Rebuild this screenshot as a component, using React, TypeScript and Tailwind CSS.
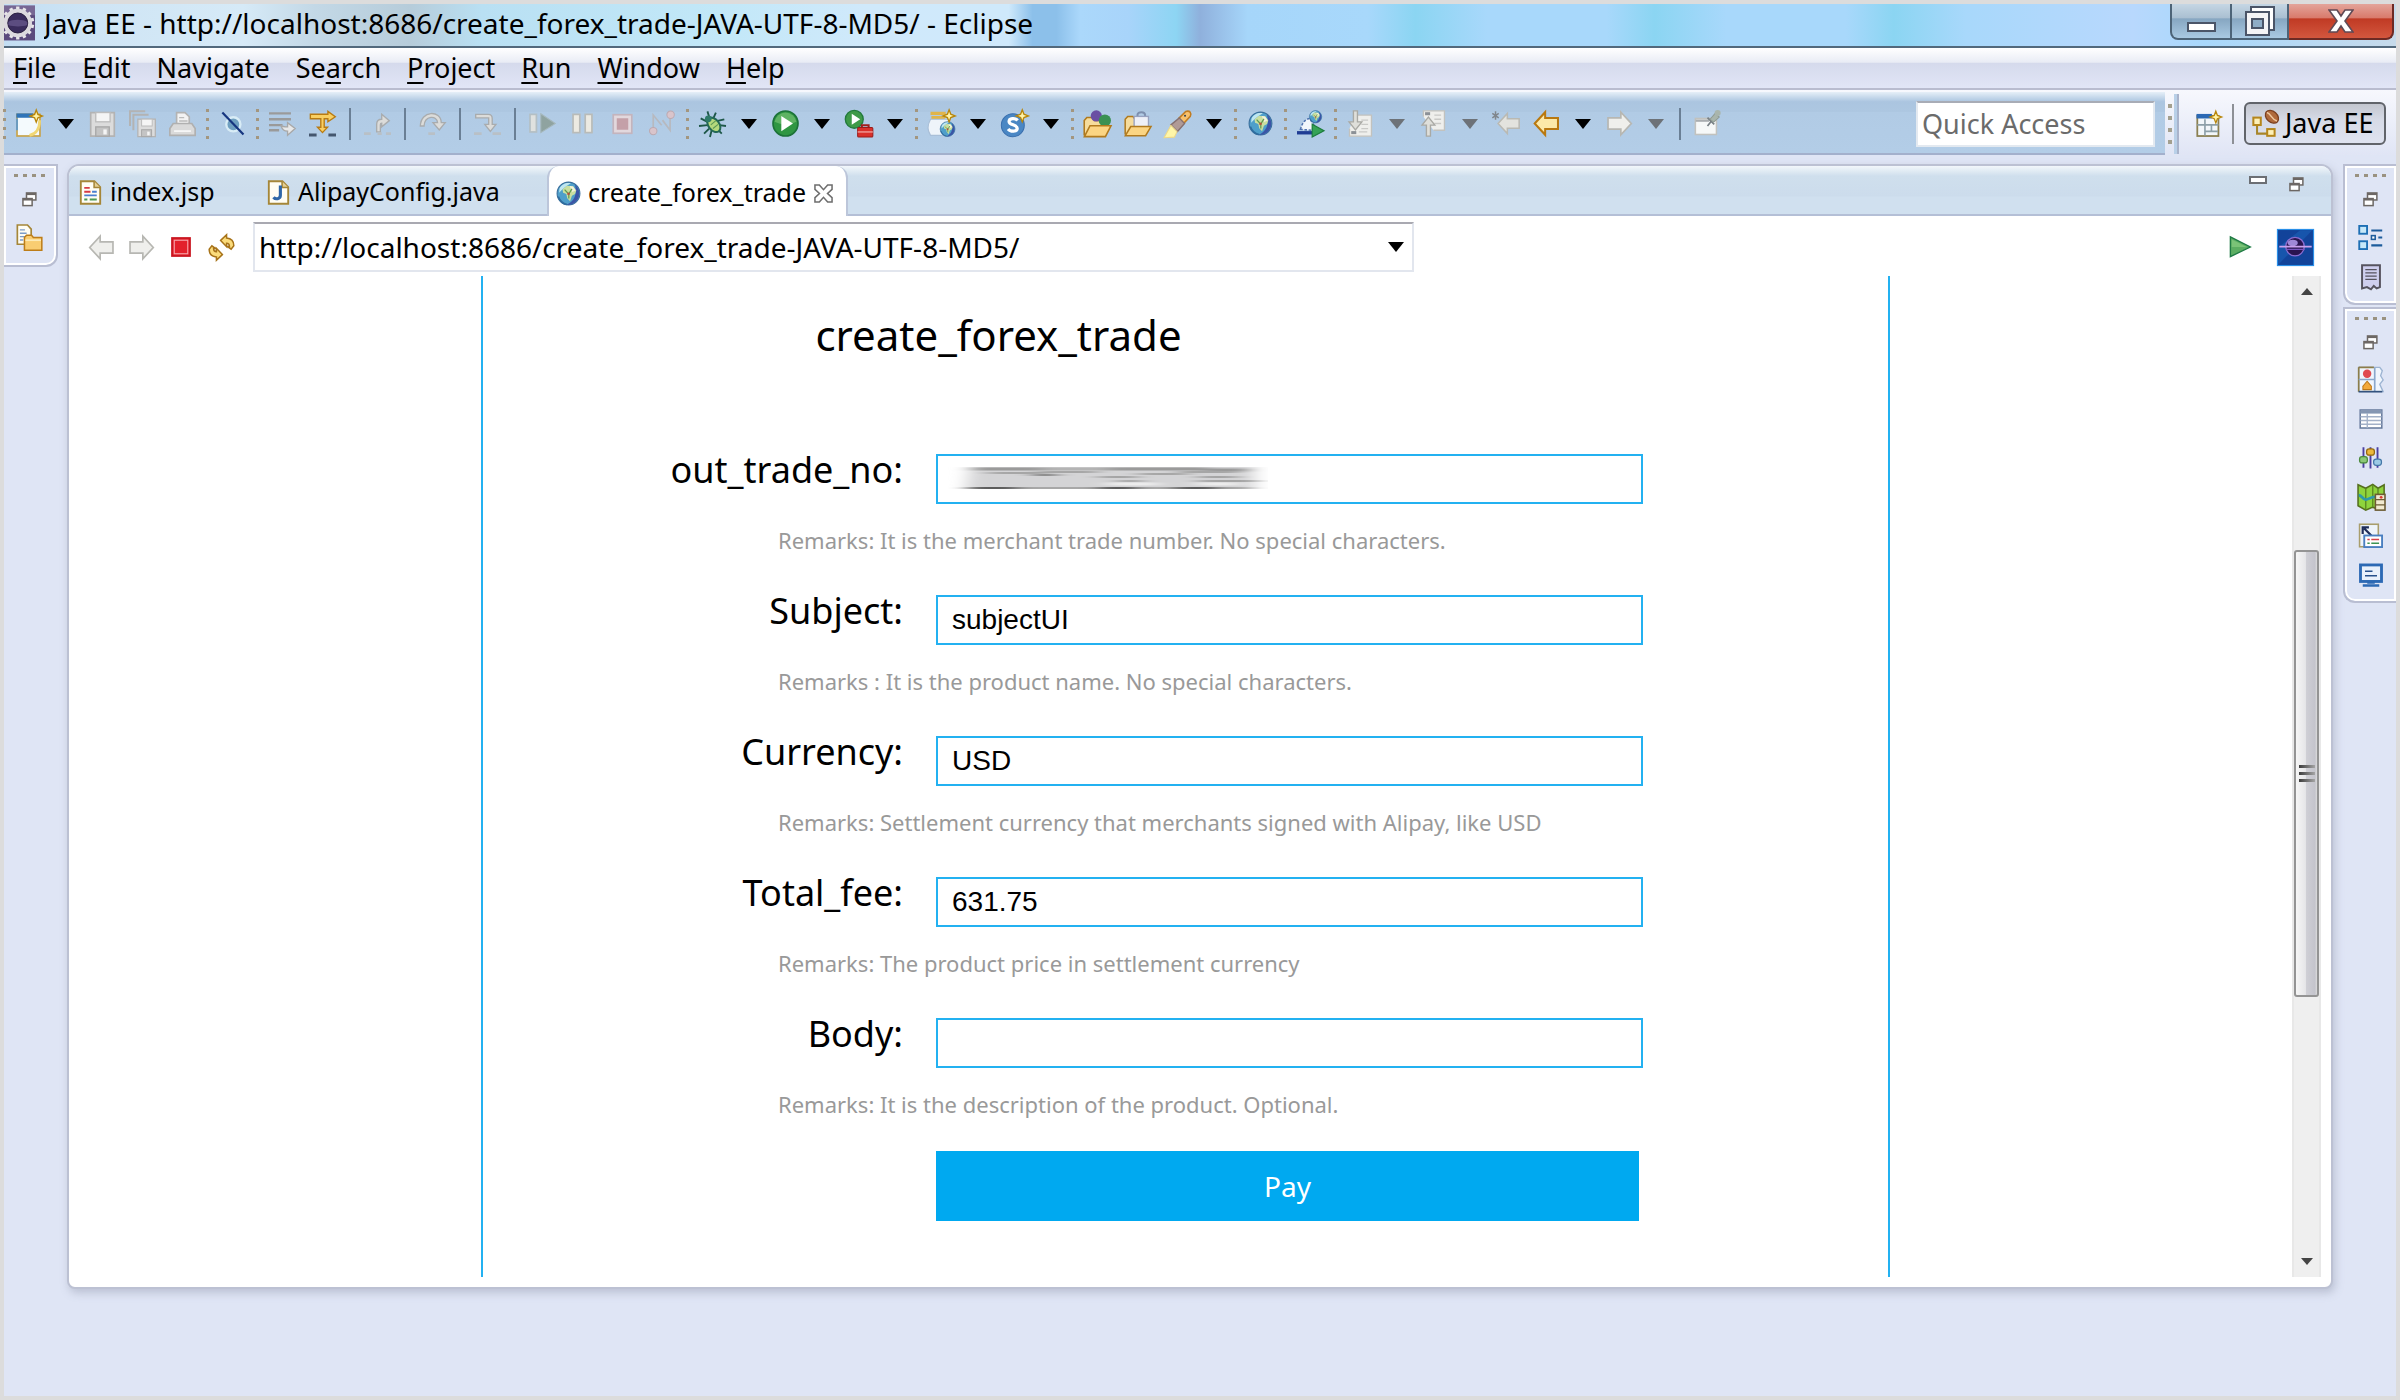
import React, { useId } from "react";

type Kids = { children?: React.ReactNode };

function Ic({ children, size = "size-[27px]" }: Kids & { size?: string }) {
  return (
    <svg viewBox="0 0 16 16" className={"shrink-0 overflow-visible " + size} fill="none" aria-hidden="true">
      {children}
    </svg>
  );
}

/* ---------- toolbar icons ---------- */

const spark = (x: number, y: number) => (
  <path
    transform={`translate(${x} ${y})`}
    d="M0-3.6 1-1 3.6 0 1 1 0 3.6-1 1-3.6 0-1-1Z"
    fill="#fff3a8"
    stroke="#b8860b"
    strokeWidth=".8"
  />
);

const NewIcon = () => (
  <Ic>
    <rect x=".6" y="2.6" width="13.6" height="12.8" fill="#f4fafd" stroke="#c8a34a" strokeWidth="1" />
    <rect x=".2" y="2" width="10" height="2.6" fill="#2f74b8" />
    <path d="M.6 5v7" stroke="#5c98d0" />
    <path d="M14 6c0 5-1.500 8-6 9" stroke="#f0d774" strokeWidth="1.6" />
    {spark(12, 3.6)}
  </Ic>
);
const floppy = (
  <>
    <path d="M1 1.500h14v14H1z" fill="#dcdcdc" stroke="#b3b3b3" />
    <rect x="4" y="1.500" width="8.500" height="5.500" fill="#f5f5f5" stroke="#bdbdbd" strokeWidth=".8" />
    <rect x="4" y="10" width="8" height="5.500" fill="#c4c4c4" stroke="#a8a8a8" strokeWidth=".8" />
    <rect x="8.500" y="11.500" width="2" height="3" fill="#f5f5f5" />
  </>
);
const SaveIcon = () => <Ic>{floppy}</Ic>;
const SaveAllIcon = () => (
  <Ic>
    <path d="M.6 9.500V.8h9" stroke="#b3b3b3" strokeWidth="1.200" />
    <path d="M2.600 12V2.800h9" stroke="#b3b3b3" strokeWidth="1.200" />
    <g transform="translate(4.500 4.300) scale(.74)">{floppy}</g>
  </Ic>
);
const PrintIcon = () => (
  <Ic>
    <path d="M4.500 8V1.500h5l2.500 2.500v4" fill="#f3f3f3" stroke="#b3b3b3" />
    <path d="M6 4.500h3M6 6.500h5" stroke="#bbb" strokeWidth=".8" />
    <path d="M2.500 8h11l2 3v4h-15v-4z" fill="#dadada" stroke="#b0b0b0" />
    <path d="M3 12.500h10" stroke="#f8f8f8" />
  </Ic>
);
const SkipBreakIcon = () => (
  <Ic>
    <circle cx="8.500" cy="8.500" r="4.200" fill="#6f9fc0" stroke="#d8ecf6" strokeWidth="1.400" />
    <path d="M2 1.500 14.500 14.500" stroke="#16357f" strokeWidth="1.300" />
  </Ic>
);
const LinesIcon = () => (
  <Ic>
    <path d="M0 2h13M0 5.500h13M0 9h8M0 12h6" stroke="#9a9a9a" strokeWidth="1.400" />
    <path d="M7 9c1 3 2 3.500 4 3.500V15l4.500-4-4.500-3.500V10c-1.500 0-3 0-4-1Z" fill="#e8e8e8" stroke="#a8a8a8" strokeWidth=".8" />
  </Ic>
);
const StepFilterIcon = () => (
  <Ic>
    <path d="M.8 2.500h10.400V.8L15.600 4l-4.400 3V5.200H9v5h2L8 13.400 5 10.200h2v-5H.8z" fill="#f9cf62" stroke="#b97b12" strokeWidth=".8" />
    <path d="M0 14.800h4.500M11.500 14.800H16" stroke="#44566e" strokeWidth="1.800" />
  </Ic>
);
const faded = "#a9acae";
const StepRetIcon = () => (
  <Ic>
    <path d="M7.500 13V8.500c0-2 1-3 3-3V2.500L15 6.300 10.500 10V7.800c-.6 0-.8.4-.8 1V13z" fill="#dcdcda" stroke={faded} strokeWidth=".8" />
    <path d="M0 14h4M8 14h2.500M13 14h3" stroke="#b9c0c6" strokeWidth="1.600" />
  </Ic>
);
const StepOverIcon = () => (
  <Ic>
    <path d="M.8 9.500C1 0 13 0 13.200 7.500h2.300l-3.500 4.300-3.700-4.300H11C10.800 3 3.300 3 3 9.500z" fill="#dcdcda" stroke={faded} strokeWidth=".8" />
    <path d="M5.500 14h4" stroke="#b9c0c6" strokeWidth="1.600" />
  </Ic>
);
const StepIntoIcon = () => (
  <Ic>
    <path d="M1 2.600h7.500c1.600 0 2.300.8 2.300 2.400v3.500H13l-3.300 4.200L6.400 8.500h2.300V4.700H1z" fill="#dcdcda" stroke={faded} strokeWidth=".8" />
    <path d="M0 14h4.500M11 14h5" stroke="#b9c0c6" strokeWidth="1.600" />
  </Ic>
);
const ResumeIcon = () => (
  <Ic>
    <rect x=".6" y="2.600" width="3.800" height="10.400" fill="#dfe1df" stroke="#b4bfc4" />
    <path d="M7 2.200v11.200L15.600 8z" fill="#8fa3a0" stroke="#a5b7bb" strokeWidth=".6" />
  </Ic>
);
const PauseIcon = () => (
  <Ic>
    <rect x="2.400" y="2.600" width="4" height="10.800" fill="#eceae2" stroke="#b9bbb8" />
    <rect x="9.600" y="2.600" width="4" height="10.800" fill="#eceae2" stroke="#b9bbb8" />
  </Ic>
);
const StopIcon = () => (
  <Ic>
    <rect x="2.500" y="2.800" width="11" height="11" fill="#e2d8dd" stroke="#c4b4bd" />
    <rect x="4.600" y="4.900" width="6.800" height="6.800" fill="#c4a0a8" />
  </Ic>
);
const DisconnectIcon = () => (
  <Ic>
    <path d="M2.500 11V3l5 6M8 6l4.500 6V4" stroke="#b7b9bf" />
    <circle cx="2.500" cy="12.500" r="2.200" fill="#d9c4cb" stroke="#bca9b1" strokeWidth=".6" />
    <circle cx="12.800" cy="2.800" r="2.200" fill="#d9c4cb" stroke="#bca9b1" strokeWidth=".6" />
  </Ic>
);
const BugIcon = () => (
  <Ic>
    <path d="M5 .8 6 4M10 1.500 8.500 5M1 5l4 2M0 9.500l5-.5M3 14l3-3M6.500 16l1-4M15 5.500l-4 1M16 9.500l-4-.5M13.500 14l-2.500-2.500" stroke="#1e5748" strokeWidth="1.100" />
    <ellipse cx="8.800" cy="8.800" rx="3.200" ry="4.800" transform="rotate(-38 8.800 8.800)" fill="#b4d87c" stroke="#246855" strokeWidth="1.200" />
    <circle cx="5.500" cy="5.200" r="2" fill="#2e7a68" />
    <path d="m7 8.800 3-2.500M8.300 11l3-2.500" stroke="#5e9a56" strokeWidth=".7" />
  </Ic>
);
const RunIcon = () => (
  <Ic>
    <circle cx="8" cy="8" r="7.400" fill="#2f9642" stroke="#1c7238" strokeWidth="1" />
    <path d="M1.500 7a6.600 6.600 0 0 1 13 0c-4 2-9 2-13 0z" fill="#74bf72" opacity=".7" />
    <path d="M5.500 3.600v9L12.400 8z" fill="#fff" />
  </Ic>
);
const ExtToolsIcon = () => (
  <Ic>
    <circle cx="5.500" cy="5.500" r="5.300" fill="#3f9a48" stroke="#237a3c" strokeWidth=".8" />
    <path d="M4 2.200v6.600L9 5.500z" fill="#fff" />
    <path d="M10 10.500V9h4v1.500" stroke="#a01f1c" strokeWidth="1.200" />
    <rect x="7.500" y="10.300" width="9" height="5.700" rx=".6" fill="#d9302b" stroke="#981c1a" strokeWidth=".6" />
    <path d="M7.500 13h9" stroke="#f0a09c" strokeWidth=".8" />
  </Ic>
);
function Globe() {
  return (
    <>
      <circle cx="8" cy="8" r="7.300" fill="#4f9fca" stroke="#3a6f9c" strokeWidth=".7" />
      <path d="M12 2.300c3.600 2.700 4.200 8.300 0 11.600-1.400 1-3.600 1.600-5 1.200C11.500 13.500 14 8 12 2.300z" fill="#3b55a6" />
      <path d="M2.200 5C3.500 2 6.500.9 9.500 1.500L7 3 4 5.500 2 7.500z" fill="#bfe6f0" />
      <path d="M4.200 5.200 7 3l4 .3 2 2.700-.8 2.300-2 1.200L9 13 7.200 11 6.600 8.300 4.500 7.500z" fill="#c9dfa0" />
      <path d="M8.800 3.200 11 3.500 12.600 6l-2.200 1z" fill="#f3f2da" />
      <path d="m5.500 5.500 2 2.200M10.200 5l-2 3.200v3" stroke="#5f9a52" strokeWidth=".8" />
      <circle cx="8" cy="8.200" r=".9" fill="#b4553f" />
      <path d="M1.500 10c1 2.800 3 4.500 5.500 5" stroke="#2f6c9e" strokeWidth="1" />
    </>
  );
}
const GlobeIcon = () => (
  <Ic size="size-[25px]">
    <Globe />
  </Ic>
);
const ServletIcon = () => (
  <Ic>
    <path d="M1.500 2h9M2 4.500h8" stroke="#e0b54c" strokeWidth="1.800" />
    <path d="M1.500 5.500h11v9.500h-11c-2-3-2-6 0-9.500z" fill="#eef4fa" stroke="#a9bfd8" strokeWidth=".7" />
    <g transform="translate(6.800 6.500) scale(.6)">
      <Globe />
    </g>
    {spark(12.500, 3.500)}
  </Ic>
);
const SIcon = () => (
  <Ic>
    <circle cx="7" cy="9" r="6.800" fill="#4a87c4" stroke="#3a6fae" strokeWidth=".6" />
    <path d="M9.800 6.200C8.500 4.500 4.600 4.800 4.800 7c.2 2 4.800 1.600 4.800 3.800 0 2.200-4 2.200-5.400.4" stroke="#fff" strokeWidth="1.900" />
    {spark(12.600, 3.500)}
  </Ic>
);
const OpenTypeIcon = () => (
  <Ic size="size-[28px]">
    <path d="M.7 14.500V6l1.500-1.700h3L6.500 6H13v3" fill="#f6dc9c" stroke="#b17a1d" strokeWidth=".9" />
    <circle cx="7.600" cy="3.400" r="3.200" fill="#6a4fa3" />
    <circle cx="12.500" cy="6" r="3.500" fill="#3a9152" />
    <path d="M.8 15.200 4 9h12l-3.200 6.200z" fill="#fbd583" stroke="#b17a1d" strokeWidth=".9" />
  </Ic>
);
const OpenTaskIcon = () => (
  <Ic>
    <path d="M.7 14.500V5.500l1.500-1.700h3L6.500 5.500H13v3" fill="#f6dc9c" stroke="#b17a1d" strokeWidth=".9" />
    <path d="M8 4.500V3c0-2.300 4.500-2.300 4.500 0v1.500" stroke="#7d8fae" strokeWidth="1.200" />
    <rect x="6" y="3.800" width="8.500" height="6.500" fill="#eef0f8" stroke="#98a2c0" strokeWidth=".8" />
    <path d="M.8 15.200 4 9.800h12l-3.200 5.400z" fill="#fbd583" stroke="#b17a1d" strokeWidth=".9" />
  </Ic>
);
const TorchIcon = () => (
  <Ic size="size-[28px]">
    <path d="M9 4.800 13 .8c2.500-.6 3.400.8 2.600 2.800L11.500 8z" fill="#f7c06c" stroke="#c17c22" strokeWidth=".9" />
    <path d="m4.500 8.500 4.800-4 3 3.200-4 4.600z" fill="#b09a96" stroke="#857070" strokeWidth=".8" />
    <path d="M4.500 8.800 8 12.400 6.500 15.500.6 15.800z" fill="#fff6a8" stroke="#ecd88a" strokeWidth=".6" />
    <circle cx="12.600" cy="3.300" r=".6" fill="#345" />
  </Ic>
);
const LaunchWebIcon = () => (
  <Ic>
    <path d="M2 11.500C3 8 4.500 5.500 7.500 5L10 9l-1 3z" fill="#f2f7fc" stroke="#5173b0" strokeWidth=".9" strokeDasharray="1.500 1" />
    <g transform="translate(7 0) scale(.5)">
      <Globe />
    </g>
    <path d="M0 13.500h9" stroke="#1f3c94" strokeWidth="2" />
    <path d="M9 8.500v7.500l7-3.700z" fill="#35a356" stroke="#1c7c3c" strokeWidth=".7" />
  </Ic>
);
const NextAnnIcon = () => (
  <Ic>
    <path d="M5 3h9.500v12.500H1.500V11" fill="#efefec" stroke="#c2c2be" strokeWidth=".8" />
    <path d="M8.500 6h4M8.500 8.500h4M8.500 11h4M7 13h5" stroke="#c9c9c6" strokeWidth=".8" />
    <path d="M3.800.5h2.400V7h2.600L5 11.800 1.200 7h2.600z" fill="#dfdfda" stroke="#a9a9a4" strokeWidth=".8" />
    <rect x="2.500" y="12.500" width="3" height="1.800" fill="#8b9096" />
  </Ic>
);
const PrevAnnIcon = () => (
  <Ic>
    <path d="M2 4V.5h12.500V12H8" fill="#efefec" stroke="#c2c2be" strokeWidth=".8" />
    <path d="M8.500 3h4M8.500 5.500h4M8.500 8h4" stroke="#c9c9c6" strokeWidth=".8" />
    <path d="M3.800 15.500h2.400V9h2.600L5 4.200 1.200 9h2.600z" fill="#dfdfda" stroke="#a9a9a4" strokeWidth=".8" />
    <rect x="3" y="1.300" width="3" height="1.800" fill="#8b9096" />
  </Ic>
);
const arrowLeft = "M1 8 7.200 1.300v3.400h7.600v6.600H7.200v3.400z";
const arrowRight = "M15 8 8.800 1.300v3.400H1.200v6.600h7.600v3.400z";
const LastEditIcon = () => (
  <Ic>
    <path d="M3 8 8.500 2v3.200H15.500v5.600H8.500V14z" fill="#e3e3de" stroke="#b9b9b3" strokeWidth=".9" />
    <path d="M1.500.8v5M-.4 2l3.800 2.600M3.400 2-.4 4.600" stroke="#80868c" strokeWidth=".9" />
  </Ic>
);
const BackGoldIcon = () => (
  <Ic>
    <path d={arrowLeft} fill="#fce9a8" stroke="#b9780f" strokeWidth="1.200" />
  </Ic>
);
const ArrowGray = ({ right }: { right?: boolean }) => (
  <Ic>
    <path d={right ? arrowRight : arrowLeft} fill="#efefec" stroke="#b7b7b2" strokeWidth="1" />
  </Ic>
);
const PinIcon = () => (
  <Ic>
    <rect x=".8" y="5" width="12.500" height="9.500" fill="#f6f8f8" stroke="#c2c2be" strokeWidth=".9" />
    <path d="M1 6.300h8" stroke="#a9adb0" strokeWidth="1.400" />
    <path d="m8 9.500 2-2.500M8 4.500l4 4" stroke="#777f84" />
    <path d="m9.500 5.500 3-3.500 2.500 2.200-3.300 3z" fill="#a9b5ac" stroke="#8d9a92" strokeWidth=".6" />
    <circle cx="14" cy="1.800" r="1.800" fill="#a9b5ac" />
  </Ic>
);
const PerspectiveIcon = () => (
  <Ic size="size-[26px]">
    <rect x=".8" y="3" width="13" height="12.400" fill="#f2f7fa" stroke="#8b8052" strokeWidth="1.100" />
    <rect x=".3" y="1.800" width="9.500" height="2.800" fill="#2a68b4" />
    <path d="M5.500 5v10M.8 8.500h13M9.500 8.500v4M5.500 12.500h8" stroke="#8da0a8" strokeWidth="1" />
    {spark(12.200, 3.700)}
  </Ic>
);
const JavaEEIcon = () => (
  <Ic size="size-[27px]">
    <path d="M3 7v7h7" stroke="#a78528" strokeWidth="1.200" />
    <rect x=".8" y="4.500" width="4.400" height="4.400" fill="#fdf0b8" stroke="#b5861c" strokeWidth="1.200" />
    <rect x="9" y="11.300" width="4.400" height="4" fill="#fdf0b8" stroke="#b5861c" strokeWidth="1.200" />
    <ellipse cx="11.800" cy="4" rx="3.200" ry="4.400" transform="rotate(-48 11.800 4)" fill="#b06a3c" stroke="#7c4020" strokeWidth=".8" />
    <path d="M8.800 1.500c2.500.5 2.500 4 6 5" stroke="#f0c9a0" strokeWidth=".9" />
  </Ic>
);

/* ---------- file, browser and side icons ---------- */

const page = <path d="M1.800.8h8.700L14.200 4.500v10.700H1.800z" fill="#fffdf4" stroke="#a58638" strokeWidth="1.200" />;
const JspIcon = () => (
  <Ic size="size-[25px]">
    {page}
    <path d="M10.300.8v4h4" fill="#e5cf93" stroke="#a58638" />
    <path d="M4 5h3.500M4 7.500h4" stroke="#d63a44" strokeWidth="1.200" />
    <path d="M9 7.500h3M4 9.800h8" stroke="#4a7fd0" strokeWidth="1.200" />
    <path d="M4 12.500h2M7.500 12.500h4.500" stroke="#4b9a55" strokeWidth="1.200" />
  </Ic>
);
const JavaIcon = () => (
  <Ic size="size-[25px]">
    {page}
    <path d="M10.300.8v4h4" fill="#e5cf93" stroke="#a58638" />
    <path d="M9.200 3.500v6.300c0 2.600-3.200 2.800-4.400 1.200" stroke="#2e66a8" strokeWidth="2" />
  </Ic>
);
const CloseX = () => (
  <Ic size="size-[19px]">
    <path
      d="M.8.800h3.700L8 4.800 11.500.8h3.700v3.700L11.400 8l3.800 3.500v3.700h-3.700L8 11.200l-3.500 4H.8v-3.700L4.600 8 .8 4.500z"
      stroke="#6e6e6e"
      strokeWidth="1.300"
    />
  </Ic>
);
const RedStop = () => (
  <Ic size="size-[20px]">
    <rect x=".8" y=".8" width="14.400" height="14.400" fill="#e3212b" stroke="#c9151f" strokeWidth="1.400" />
    <rect x="2.600" y="2.600" width="10.800" height="10.800" stroke="#f6a4a8" strokeWidth=".9" />
  </Ic>
);
const RefreshIcon = () => (
  <Ic>
    <path d="M7.500 3.800 11 .4v2c2.600.2 4.300 1.800 4.300 4.600L13.700 9l-2.200-1.600h1.200c0-1.300-.6-1.900-1.700-1.900v2z" fill="#fbdc7c" stroke="#a8741a" strokeWidth=".9" />
    <path d="M8.500 12.200 5 15.600v-2C2.400 13.400.7 11.800.7 9L2.300 7l2.200 1.600H3.300c0 1.300.6 1.900 1.700 1.900v-2z" fill="#fbdc7c" stroke="#a8741a" strokeWidth=".9" />
  </Ic>
);
const PlayIcon = () => (
  <Ic size="size-[22px]">
    <path d="M1 .6v14.400L15.500 8z" fill="#5cae62" stroke="#1f7a45" strokeWidth="1" />
    <path d="M2 2.500v5.500h11z" fill="#8ed086" opacity=".6" />
  </Ic>
);
const EclipseBadge = () => (
  <Ic size="size-[37px]">
    <rect x=".2" y=".2" width="15.600" height="15.600" fill="#12439a" stroke="#2a8fe8" strokeWidth=".5" />
    <path d="M.5 15.500V8L10 .5h5.300z" fill="#1a5cb4" opacity=".7" />
    <circle cx="7.800" cy="7.600" r="4" fill="#2a1450" stroke="#8a6cd0" strokeWidth=".6" />
    <ellipse cx="6.800" cy="6" rx="2.200" ry="1.400" fill="#9f88d8" />
    <path d="M1 7.600h14" stroke="#c9a0ee" strokeWidth=".7" />
    <path d="M4 8.800h8" stroke="#7a54c0" strokeWidth=".6" />
  </Ic>
);
const RestoreIcon = () => (
  <Ic size="size-[15px]">
    <rect x="4.800" y="1" width="10" height="7.500" fill="#fff" stroke="#6c6764" strokeWidth="1.600" />
    <path d="M4.800 2.200h10" stroke="#6c6764" strokeWidth="2.200" />
    <rect x="1" y="7" width="9.800" height="7.500" fill="#fff" stroke="#6c6764" strokeWidth="1.600" />
    <path d="M1 8h9.800" stroke="#6c6764" strokeWidth="2.200" />
  </Ic>
);
const ExplorerIcon = () => (
  <Ic>
    <path d="M.8.600h6L9 3v9H.8z" fill="#fffdf4" stroke="#a58638" />
    <path d="M2.300 3.500h3M2.300 5.500h4M2.300 7.500h3M2.300 9.500h2" stroke="#7d9cc8" strokeWidth=".8" />
    <path d="M5 15.500V8l1.200-1.300h3L10.300 8h5v7.500z" fill="#f9cd72" stroke="#bd7d18" strokeWidth=".9" />
    <path d="M5.600 9.600h9.200" stroke="#fdebb8" />
  </Ic>
);
const OutlineIcon = () => (
  <Ic size="size-[25px]">
    <rect x=".8" y=".6" width="5" height="5" fill="#c6e8f8" stroke="#1d6fb4" strokeWidth="1.200" />
    <rect x=".8" y="10.400" width="5" height="5" fill="#c6e8f8" stroke="#1d6fb4" strokeWidth="1.200" />
    <path d="M8.500 3.500h7M13 8h2.500M8.500 13h7" stroke="#1d5c9c" strokeWidth="1.400" />
    <rect x="8.600" y="6.800" width="2.400" height="2.400" fill="#fff" stroke="#1d5c9c" strokeWidth="1" />
  </Ic>
);
const TasksIcon = () => (
  <Ic size="size-[26px]">
    <path d="M2.500.8h11v13.400l-2 .8-1.800-1.500L8 15.600l-2.500-1.400-3 .8z" fill="#cfcfee" stroke="#56535e" strokeWidth="1.200" />
    <path d="M4.500 3.500h7M4.500 5.500h7M4.500 7.500h7M4.500 9.500h7" stroke="#56535e" strokeWidth=".8" />
  </Ic>
);
const MarkersIcon = () => (
  <Ic>
    <path d="M1 .8h12.500l1.500 2-1 3 1.500 2.500-2 2.500 2 4.400H1z" fill="#f0f6fd" stroke="#9db4d2" strokeWidth=".8" />
    <path d="M1 .8v14.400M1 .8h9" stroke="#8c7d4a" strokeWidth="1" />
    <path d="M1 8h9.500M10.500 1v14" stroke="#8ba8cc" />
    <circle cx="6" cy="4.600" r="2.500" fill="#e04a50" />
    <path d="M3.500 14v-2l2.500-3 2.500 3v2z" fill="#f3a93a" stroke="#bd7818" strokeWidth=".6" />
    <path d="M1 15.200h14" stroke="#33527e" strokeWidth="1" />
  </Ic>
);
const TableIcon = () => (
  <Ic size="size-[24px]">
    <rect x=".8" y="2" width="14.400" height="12" fill="#fff" stroke="#64789a" strokeWidth="1" />
    <path d="M.8 3.300h14.400" stroke="#8496b2" strokeWidth="2.200" />
    <path d="M1 6.500h14M1 9h14M1 11.500h14M5.500 4v10" stroke="#a3b1c8" strokeWidth=".9" />
  </Ic>
);
const ServersIcon = () => (
  <Ic size="size-[25px]">
    <path d="M3.500 1.500v13M8 1.500v13.500M12.500 1.500v13" stroke="#4a3fa0" strokeWidth="1.200" />
    <rect x="1" y="7.500" width="5" height="4" rx="1.600" fill="#8cc878" stroke="#4a8a3c" strokeWidth=".8" />
    <rect x="5.500" y="2.500" width="5" height="4" rx="1.600" fill="#ecb83c" stroke="#96690e" strokeWidth=".8" />
    <rect x="10" y="9" width="5" height="4" rx="1.600" fill="#9ccbe6" stroke="#4478a8" strokeWidth=".8" />
  </Ic>
);
const DataSourceIcon = () => (
  <Ic size="size-[28px]">
    <path d="M.6 1 5 3l4-2.200L12 3l3.500-2v12.500L12 15l-3-1.200L5 15.500.6 13z" fill="#8ed43c" stroke="#56701e" strokeWidth=".9" />
    <path d="M5 3v12M9 1v12.500M12 3v5" stroke="#5d8a22" strokeWidth=".8" />
    <path d="M1 7c2 0 2 2.500 4 2.500S8 7.500 11 8" stroke="#2e9aa8" strokeWidth="1.600" />
    <rect x="10.500" y="6.500" width="5.500" height="9" fill="#f1ead0" stroke="#6c5c34" strokeWidth=".9" />
    <path d="M10.500 9.500H16M10.500 12.500H16" stroke="#6c5c34" strokeWidth=".8" />
    <circle cx="13.800" cy="8.200" r=".8" fill="#dc3a30" />
  </Ic>
);
const SnippetsIcon = () => (
  <Ic size="size-[25px]">
    <rect x="1" y=".8" width="12" height="14.400" fill="#eef4fa" stroke="#a99e6c" strokeWidth="1" />
    <path d="M8.500 8 4 3.500M3 7V2.800h4" stroke="#1e2c58" strokeWidth="1.400" />
    <rect x="4" y="8" width="11.400" height="7.400" fill="#fff" stroke="#4a7fc0" strokeWidth="1.200" />
    <path d="M6 10.500h1.500M8.500 10.500h5" stroke="#d8404a" strokeWidth="1" />
    <path d="M6 13h1.500M8.500 13h5" stroke="#3d9454" strokeWidth="1" />
  </Ic>
);
const ConsoleIcon = () => (
  <Ic size="size-[24px]">
    <rect x="1" y="1.300" width="14" height="11" fill="#e8f0fb" stroke="#2c69b4" strokeWidth="1.900" />
    <path d="M4 5.500h5M4 8.500h8" stroke="#27508c" strokeWidth="1" />
    <path d="M5.500 13h5M2.500 15h11" stroke="#2c69b4" strokeWidth="1.600" />
  </Ic>
);
const EclipseLogo = () => {
  const teeth = Array.from({ length: 14 }, (_, i) => i * (360 / 14));
  return (
    <svg viewBox="0 0 32 36" className="h-[36px] w-[31px] shrink-0" aria-hidden="true">
      <rect width="32" height="36" fill="#5b4a7d" />
      <rect width="32" height="10" fill="#8a7ba4" opacity=".6" />
      {teeth.map((a) => (
        <rect key={a} x="12.500" y="1" width="3.400" height="6" fill="#e8e6ea" transform={`rotate(${a} 14.200 18)`} />
      ))}
      <circle cx="14.200" cy="18" r="12.500" fill="none" stroke="#dcd9de" strokeWidth="4.500" />
      <circle cx="14.200" cy="18" r="10.300" fill="#3a2c5c" stroke="#2a2040" strokeWidth="1" />
      <path d="M4.500 17c3-3 16-3 19.500 0v3c-5 2-14 2-19.500 0z" fill="#5c4d80" />
    </svg>
  );
};

/* ---------- small building blocks ---------- */

function Tool({ label, children }: Kids & { label: string }) {
  return (
    <button type="button" aria-label={label} className="flex w-10 shrink-0 items-center justify-center">
      {children}
    </button>
  );
}
function Drop({ dim }: { dim?: boolean }) {
  return (
    <button type="button" aria-label="More" className="flex w-[33px] shrink-0 justify-center">
      <svg viewBox="0 0 16 10" className="h-[10px] w-4" aria-hidden="true">
        <path d="M0 0h16L8 10z" fill={dim ? "#6d7278" : "#000"} />
      </svg>
    </button>
  );
}
function Grip() {
  return (
    <span className="flex w-[10px] shrink-0 flex-col items-center gap-[6px]">
      {[0, 1, 2, 3].map((i) => (
        <i key={i} className="size-[3px] bg-[#a3967f]" />
      ))}
    </span>
  );
}
function Bar() {
  return (
    <span className="flex w-[15px] shrink-0 justify-center">
      <i className="h-8 w-[2px] bg-[#6a7f95]" />
    </span>
  );
}
function HGrip() {
  return (
    <span className="flex h-[5px] items-center gap-[5px]">
      {[0, 1, 2, 3].map((i) => (
        <i key={i} className="h-[3px] w-[4px] bg-[#9a9280]" />
      ))}
    </span>
  );
}
function SideButton({ label, children }: Kids & { label: string }) {
  return (
    <button type="button" aria-label={label} className="flex h-[39px] items-center justify-center">
      {children}
    </button>
  );
}

const menus: [string, string, string][] = [
  ["", "F", "ile"],
  ["", "E", "dit"],
  ["", "N", "avigate"],
  ["Se", "a", "rch"],
  ["", "P", "roject"],
  ["", "R", "un"],
  ["", "W", "indow"],
  ["", "H", "elp"],
];

const fields = [
  { id: "out_trade_no", value: "", note: "Remarks: It is the merchant trade number. No special characters.", hidden: true },
  { id: "Subject", value: "subjectUI", note: "Remarks : It is the product name. No special characters." },
  { id: "Currency", value: "USD", note: "Remarks: Settlement currency that merchants signed with Alipay, like USD" },
  { id: "Total_fee", value: "631.75", note: "Remarks: The product price in settlement currency" },
  { id: "Body", value: "", note: "Remarks: It is the description of the product. Optional." },
];

function Smudge() {
  const id = useId();
  return (
    <svg viewBox="0 0 320 28" className="pointer-events-none absolute left-3 top-[10px] h-7 w-80" aria-hidden="true">
      <defs>
        <filter id={id} x="-10%" y="-20%" width="120%" height="140%">
          <feGaussianBlur stdDeviation="9 0.7" />
        </filter>
      </defs>
      <g filter={`url(#${id})`} fill="none">
        <path d="M22 3h284v22H18z" fill="#d4d4d6" />
        <path d="M24 5h70M160 5h100M256 6h44" stroke="#9a9a9a" strokeWidth="3" />
        <path d="M94 5h66" stroke="#b4b4b4" strokeWidth="3" />
        <path d="M40 9h60M90 8h60M190 10h50M230 8h60" stroke="#a6a6a6" strokeWidth="2" />
        <path d="M84 11h26" stroke="#808080" strokeWidth="2" />
        <path d="M150 13h40M250 13h40M170 17h24M250 17h60" stroke="#a4a4a4" strokeWidth="2" />
        <path d="M160 20h50M250 20h40" stroke="#ececec" strokeWidth="3" />
        <path d="M20 24h50M150 24h40M226 24h44" stroke="#5c5c5c" strokeWidth="2" />
        <path d="M70 24h80M190 24h36M270 24h34" stroke="#a8a8a8" strokeWidth="2" />
      </g>
    </svg>
  );
}

function TitleBar() {
  const btn = "flex h-9 items-center justify-center border-2 border-t-0 border-[#4d6478]";
  return (
    <header className="flex h-[44px] items-start border-b-2 border-[#52697c] bg-[linear-gradient(90deg,#c3def3_0%,#cfe5f5_4%,#d6eaf7_10%,#c3d8e6_13%,#b6ccda_17%,#b9e0f3_20%,#c2e8f8_30%,#d0e9fb_36%,#cfe9fb_42%,#8cc0ea_43%,#8cc0ea_44%,#abd8fb_45%,#a8d4fa_47%,#8dd5f3_49%,#8fb0dc_50%,#a6d6fa_52%,#a8d8fb_57%,#8bd5f2_59%,#a8d8fb_62%,#a8d8fb_67%,#8bd5f2_69%,#a8d8fb_72%,#a8d8fb_77%,#8bd5f2_79%,#a8d8fb_82%,#b8d8fd_89%,#a8d8fb_92%,#c6daea_100%)]">
      <div className="flex min-w-0 flex-1 items-center gap-[9px] pt-[1px]">
        <EclipseLogo />
        <h1 className="truncate text-[28px] leading-9">
          Java EE - http://localhost:8686/create_forex_trade-JAVA-UTF-8-MD5/ - Eclipse
        </h1>
      </div>
      <div className="flex shrink-0 pr-[2px]">
        <button type="button" aria-label="Minimize" className={btn + " w-[62px] rounded-bl-lg bg-[linear-gradient(#c5d6e4_0%,#a9bfd1_42%,#86a6c1_43%,#a9c9e2_100%)]"}>
          <i className="mt-3 h-[10px] w-[29px] border-2 border-[#4b5568] bg-white" />
        </button>
        <button type="button" aria-label="Restore" className={btn + " w-[57px] border-l-0 bg-[linear-gradient(#c5d6e4_0%,#a9bfd1_42%,#86a6c1_43%,#a9c9e2_100%)]"}>
          <svg viewBox="0 0 32 30" className="h-[30px] w-8" aria-hidden="true">
            <path d="M7 1h23v23H7z" fill="#fff" stroke="#4b5568" strokeWidth="2" />
            <path d="M2 6h23v23H2z" fill="#f4f4f6" stroke="#4b5568" strokeWidth="2" />
            <path d="M8 13h11v9H8z" fill="#8fadc6" stroke="#4b5568" strokeWidth="2" />
          </svg>
        </button>
        <button type="button" aria-label="Close" className="flex h-9 w-[105px] items-center justify-center rounded-br-lg border-2 border-t-0 border-l-0 border-[#6d2a24] bg-[linear-gradient(#e3a49a_0%,#d9796a_42%,#c03a24_43%,#d3573e_100%)]">
          <svg viewBox="0 0 26 24" className="h-6 w-[26px]" aria-hidden="true">
            <path d="M1 1h8l4 6 4-6h8l-8 11 8 11h-8l-4-6-4 6H1l8-11z" fill="#fff" stroke="#5f4a55" strokeWidth="1.600" />
          </svg>
        </button>
      </div>
    </header>
  );
}

function Toolbar() {
  return (
    <div className="flex h-[65px] bg-[linear-gradient(#f7f8fd,#e0e5f5)] pt-[2px]">
      <div role="toolbar" className="flex min-w-0 flex-1 items-center border-b-2 border-[#a3b0cc] bg-[linear-gradient(#e6eff8_0%,#abc5e0_16%,#adc7e1_32%,#b1cbe5_33%,#b3cde7_100%)] pt-[2px] pr-[10px]">
        <span className="-ml-[5px] flex"><Grip /></span>
        <Tool label="New"><NewIcon /></Tool>
        <Drop />
        <Tool label="Save"><SaveIcon /></Tool>
        <Tool label="Save All"><SaveAllIcon /></Tool>
        <Tool label="Print"><PrintIcon /></Tool>
        <Grip />
        <Tool label="Skip All Breakpoints"><SkipBreakIcon /></Tool>
        <Grip />
        <Tool label="Drop to Frame"><LinesIcon /></Tool>
        <Tool label="Use Step Filters"><StepFilterIcon /></Tool>
        <Bar />
        <Tool label="Step Return"><StepRetIcon /></Tool>
        <Bar />
        <Tool label="Step Over"><StepOverIcon /></Tool>
        <Bar />
        <Tool label="Step Into"><StepIntoIcon /></Tool>
        <Bar />
        <Tool label="Resume"><ResumeIcon /></Tool>
        <Tool label="Suspend"><PauseIcon /></Tool>
        <Tool label="Terminate"><StopIcon /></Tool>
        <Tool label="Disconnect"><DisconnectIcon /></Tool>
        <Grip />
        <Tool label="Debug"><BugIcon /></Tool>
        <Drop />
        <Tool label="Run"><RunIcon /></Tool>
        <Drop />
        <Tool label="External Tools"><ExtToolsIcon /></Tool>
        <Drop />
        <Grip />
        <Tool label="New Web Project"><ServletIcon /></Tool>
        <Drop />
        <Tool label="New Servlet"><SIcon /></Tool>
        <Drop />
        <Grip />
        <Tool label="Open Type"><OpenTypeIcon /></Tool>
        <Tool label="Open Task"><OpenTaskIcon /></Tool>
        <Tool label="Search"><TorchIcon /></Tool>
        <Drop />
        <Grip />
        <Tool label="Open Web Browser"><GlobeIcon /></Tool>
        <Grip />
        <Tool label="Web Services Explorer"><LaunchWebIcon /></Tool>
        <Grip />
        <Tool label="Next Annotation"><NextAnnIcon /></Tool>
        <Drop dim />
        <Tool label="Previous Annotation"><PrevAnnIcon /></Tool>
        <Drop dim />
        <Tool label="Last Edit Location"><LastEditIcon /></Tool>
        <Tool label="Back"><BackGoldIcon /></Tool>
        <Drop />
        <Tool label="Forward"><ArrowGray right /></Tool>
        <Drop dim />
        <Bar />
        <Tool label="Pin Editor"><PinIcon /></Tool>
        <input
          type="text"
          aria-label="Quick Access"
          placeholder="Quick Access"
          className="ml-auto h-[46px] w-[239px] border-2 border-[#e3e9f0] border-t-[#a8acb6] bg-white px-[4px] text-[27px] outline-none placeholder:text-[#6b6b6b]"
        />
      </div>
      <div className="flex shrink-0 items-center pr-[10px]">
        <span className="flex w-[9px] flex-col items-center gap-[8px]">
          {[0, 1, 2, 3].map((i) => (
            <i key={i} className="size-[4px] bg-[#a3a08f]" />
          ))}
        </span>
        <i className="mr-[17px] h-[60px] w-[5px] border-r-2 border-[#a9b3cb] bg-[#b9d0e8]" />
        <button type="button" aria-label="Open Perspective"><PerspectiveIcon /></button>
        <i className="mx-[10px] h-10 w-[2px] bg-[#8d9096]" />
        <button type="button" className="flex h-[43px] w-[142px] items-center gap-[6px] rounded-md border-2 border-[#61646a] bg-[linear-gradient(#c3c6cf,#d6dae6_40%,#dfe3f0)] pl-[6px] text-[27px] whitespace-nowrap">
          <JavaEEIcon />
          Java EE
        </button>
      </div>
    </div>
  );
}

function PaymentPage() {
  return (
    <main className="mx-auto w-full max-w-[1409px] border-x-2 border-[#23b1f1] px-5 pt-[29px] pb-[56px]">
      <h2 className="mr-[374px] text-center text-[42px] leading-[60px]">create_forex_trade</h2>
      <form className="mt-[89px]">
        {fields.map((f) => (
          <div key={f.id} className="grid h-[141px] grid-cols-[400px_minmax(0,707px)] content-start gap-x-[33px] gap-y-[21px]">
            <label htmlFor={f.id} className="-mt-2 text-right text-[36px] leading-[48px]">
              {f.id}:
            </label>
            <div className="relative">
              <input
                id={f.id}
                type="text"
                defaultValue={f.value}
                className="block h-[50px] w-full border-2 border-[#23b1f1] bg-white px-[14px] font-['Liberation_Sans',sans-serif] text-[28px] outline-none"
              />
              {f.hidden && <Smudge />}
            </div>
            <p className="col-span-2 ml-[275px] text-[22px] leading-[30px] text-[#999]">{f.note}</p>
          </div>
        ))}
        <button type="submit" className="-mt-2 ml-[433px] block h-[70px] w-full max-w-[703px] bg-[#00a9f0] text-[28px] text-white">
          Pay
        </button>
      </form>
    </main>
  );
}

function ScrollBar() {
  return (
    <div role="scrollbar" aria-controls="browser" aria-valuenow={49} className="flex w-[29px] shrink-0 flex-col items-center justify-between border-x-2 border-[#e8e8e8] bg-[#efefef] py-3">
      <svg viewBox="0 0 12 7" className="h-[7px] w-3" aria-hidden="true"><path d="M0 7h12L6 0z" fill="#444" /></svg>
      <div className="mt-[10px] mb-auto flex w-full flex-1 flex-col">
        <div className="flex-[245]" />
        <div className="flex w-full flex-[442] flex-col items-center justify-center gap-[4px] rounded-[3px] border-2 border-[#949494] bg-[linear-gradient(90deg,#f6f6f6,#e6e6e8_45%,#cfcfd5_50%,#c4c4cc_90%,#dcdcdc)]">
          {[0, 1, 2].map((i) => (
            <i key={i} className="h-[3px] w-4 bg-[linear-gradient(90deg,#3c3c3c,#a5a5a5)]" />
          ))}
        </div>
        <div className="flex-[261]" />
      </div>
      <svg viewBox="0 0 12 7" className="h-[7px] w-3" aria-hidden="true"><path d="M0 0h12L6 7z" fill="#444" /></svg>
    </div>
  );
}

function Editor() {
  return (
    <section className="flex min-w-0 flex-1 flex-col overflow-hidden rounded-t-xl rounded-b-lg border-2 border-[#bcc1d3] bg-white shadow-[2px_4px_8px_rgba(120,125,150,0.35)]">
      <div role="tablist" className="flex h-[50px] shrink-0 bg-[linear-gradient(#f2f7fb_0%,#cfdfed_20%,#ccdcec_60%,#d0e0ef_62%,#d0e0ef_100%)] text-[25px]">
        <button type="button" role="tab" className="flex w-[189px] items-center gap-[7px] border-b-2 border-[#b4bfd6] pl-[9px] pt-[4px]">
          <JspIcon />index.jsp
        </button>
        <button type="button" role="tab" className="flex w-[289px] items-center gap-[7px] border-b-2 border-[#b4bfd6] pl-[8px] pt-[4px]">
          <JavaIcon />AlipayConfig.java
        </button>
        <div className="flex w-[301px] items-center gap-2 rounded-t-xl border-x-2 border-[#bcc6da] bg-white pl-[7px] pt-[4px]">
          <button type="button" role="tab" aria-selected="true" className="flex items-center gap-[7px]">
            <GlobeIcon />create_forex_trade
          </button>
          <button type="button" aria-label="Close tab"><CloseX /></button>
        </div>
        <div className="flex flex-1 items-start justify-end gap-[22px] border-b-2 border-[#b4bfd6] pt-[10px] pr-[27px]">
          <button type="button" aria-label="Minimize editor" className="h-[8px] w-[18px] border-2 border-[#6c6f74] bg-white" />
          <button type="button" aria-label="Restore editor" className="mt-[1px]"><RestoreIcon /></button>
        </div>
      </div>
      <div className="flex shrink-0 items-center pt-[6px] pr-[17px] pb-[4px] pl-[12px]">
        <Tool label="Back"><ArrowGray /></Tool>
        <Tool label="Forward"><ArrowGray right /></Tool>
        <Tool label="Stop"><RedStop /></Tool>
        <Tool label="Refresh"><RefreshIcon /></Tool>
        <div className="relative ml-[12px] w-[1161px]">
          <input
            type="text"
            aria-label="Address"
            defaultValue="http://localhost:8686/create_forex_trade-JAVA-UTF-8-MD5/"
            className="block h-[50px] w-full border-2 border-[#e2e6ee] border-t-[#a9a9b1] bg-white pl-[4px] pr-10 text-[28px] outline-none"
          />
          <span className="absolute top-5 right-[2px] flex"><Drop /></span>
        </div>
        <div className="ml-auto flex items-center gap-[26px]">
          <button type="button" aria-label="Go"><PlayIcon /></button>
          <EclipseBadge />
        </div>
      </div>
      <div id="browser" className="flex flex-1 pr-[10px] pb-[10px] pl-[10px]">
        <div className="flex min-w-0 flex-1"><PaymentPage /></div>
        <ScrollBar />
      </div>
    </section>
  );
}

const sidePanel =
  "flex flex-col items-center border-2 border-[#b9bed2] pt-[7px] shadow-[inset_0_0_0_2px_#fff]";

export default function App() {
  return (
    <div className="flex min-h-screen flex-col bg-[#dcdcdc] p-1 font-['Noto_Sans','Open_Sans',sans-serif] text-black">
      <div className="flex flex-1 flex-col bg-[#dfe5f5]">
        <TitleBar />
        <nav className="flex h-[42px] items-center gap-[26px] border-b-2 border-[#b9bccf] bg-[linear-gradient(#ffffff_0%,#e9ecf5_36%,#d5daec_37%,#e1e5f6_100%)] pl-[9px] text-[27px]">
          {menus.map(([a, b, c]) => (
            <button key={a + b + c} type="button" className="leading-[40px]">
              {a}
              <span className="underline decoration-2 underline-offset-[4px]">{b}</span>
              {c}
            </button>
          ))}
        </nav>
        <Toolbar />
        <div className="flex flex-1 items-stretch pt-[9px] pb-[107px]">
          <aside className="w-[63px] shrink-0">
            <div className={sidePanel + " h-[103px] w-[54px] rounded-br-xl border-l-0 pr-[2px]"}>
              <HGrip />
              <button type="button" aria-label="Restore" className="mt-[14px]"><RestoreIcon /></button>
              <span className="mt-[11px]"><SideButton label="Project Explorer"><ExplorerIcon /></SideButton></span>
            </div>
          </aside>
          <Editor />
          <aside className="ml-[10px] flex w-[53px] shrink-0 flex-col gap-[2px]">
            <div className={sidePanel + " h-[141px] rounded-bl-xl border-r-0"}>
              <HGrip />
              <button type="button" aria-label="Restore" className="mt-[14px] mb-[11px]"><RestoreIcon /></button>
              <SideButton label="Outline"><OutlineIcon /></SideButton>
              <SideButton label="Task List"><TasksIcon /></SideButton>
            </div>
            <div className={sidePanel + " h-[296px] rounded-bl-xl border-r-0"}>
              <HGrip />
              <button type="button" aria-label="Restore" className="mt-[14px] mb-[10px]"><RestoreIcon /></button>
              <SideButton label="Markers"><MarkersIcon /></SideButton>
              <SideButton label="Properties"><TableIcon /></SideButton>
              <SideButton label="Servers"><ServersIcon /></SideButton>
              <SideButton label="Data Source Explorer"><DataSourceIcon /></SideButton>
              <SideButton label="Snippets"><SnippetsIcon /></SideButton>
              <SideButton label="Console"><ConsoleIcon /></SideButton>
            </div>
          </aside>
        </div>
      </div>
    </div>
  );
}
